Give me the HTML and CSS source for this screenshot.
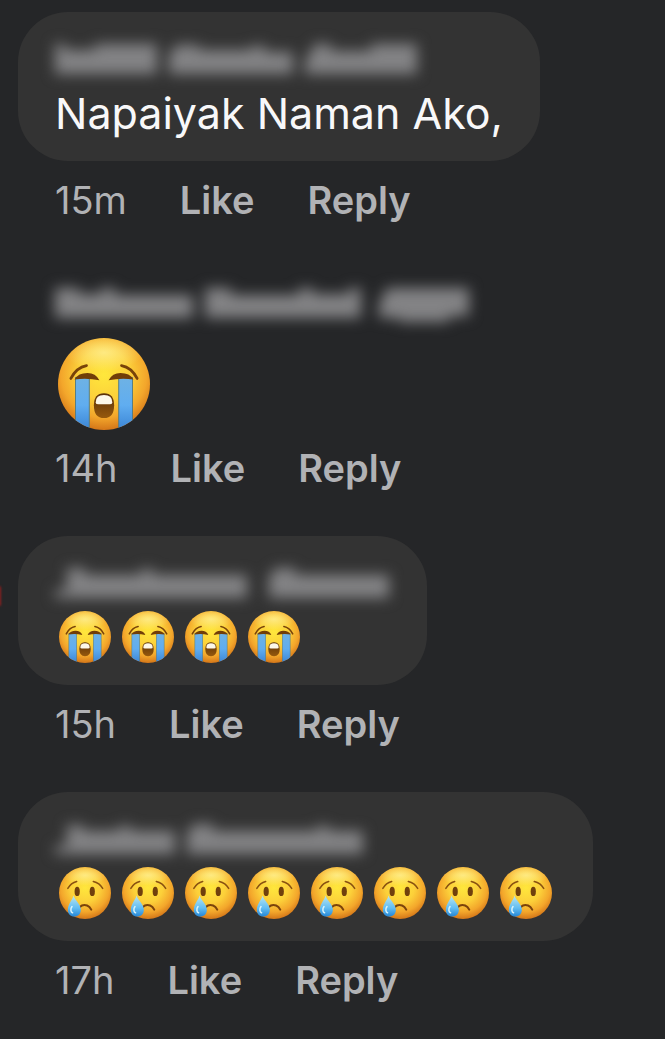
FILE: index.html
```
<!DOCTYPE html>
<html lang="en">
<head>
    <meta charset="UTF-8">
    <meta name="viewport" content="width=device-width, initial-scale=1.0">
    <title>Comments</title>
    <link rel="stylesheet" href="styles.css">
</head>
<body>

    <!-- emoji shapes, reused below -->
    <svg class="defs" aria-hidden="true">
        <defs>
            <radialGradient id="face" cx="50%" cy="40%" r="62%">
                <stop offset="0" stop-color="#ffe73c"/>
                <stop offset="0.45" stop-color="#fcd03a"/>
                <stop offset="0.75" stop-color="#f3a62b"/>
                <stop offset="1" stop-color="#cf6f16"/>
            </radialGradient>
            <radialGradient id="shine" cx="50%" cy="50%" r="50%">
                <stop offset="0" stop-color="#fff3a0" stop-opacity="0.7"/>
                <stop offset="1" stop-color="#fff3a0" stop-opacity="0"/>
            </radialGradient>
            <linearGradient id="stream" x1="0" y1="0" x2="0" y2="1">
                <stop offset="0" stop-color="#6eb2e4"/>
                <stop offset="0.5" stop-color="#60adf0"/>
                <stop offset="1" stop-color="#3680d2"/>
            </linearGradient>
            <linearGradient id="drop" x1="0" y1="0" x2="0" y2="1">
                <stop offset="0" stop-color="#b9e6f0"/>
                <stop offset="0.6" stop-color="#62bdf2"/>
                <stop offset="1" stop-color="#2687d6"/>
            </linearGradient>
            <linearGradient id="mouth" x1="0" y1="0" x2="0" y2="1">
                <stop offset="0" stop-color="#593008"/>
                <stop offset="1" stop-color="#96590d"/>
            </linearGradient>
            <clipPath id="round"><circle cx="50" cy="50" r="50"/></clipPath>

            <symbol id="sob" viewBox="0 0 100 100">
                <circle cx="50" cy="50" r="50" fill="url(#face)"/>
                <ellipse cx="50" cy="16" rx="42" ry="20" fill="url(#shine)" clip-path="url(#round)"/>
                <g clip-path="url(#round)" stroke="#527a83" stroke-width="1">
                    <rect x="19" y="43" width="15" height="60" fill="url(#stream)"/>
                    <rect x="66" y="43" width="15" height="60" fill="url(#stream)"/>
                </g>
                <path d="M14 44Q20 32 31 30M69 30Q80 32 86 44" fill="none" stroke="#784309" stroke-width="3" stroke-linecap="round"/>
                <path d="M18 45Q22 38 32 38Q41 38 45 46Q32 43 18 45ZM55 46Q59 38 68 38Q78 38 82 45Q68 43 55 46Z" fill="#713e08"/>
                <path d="M39 73Q39 60 50 60Q61 60 61 73Q61 87 50 87Q39 87 39 73Z" fill="url(#mouth)"/>
                <path d="M41 70Q41 62 50 62Q59 62 59 70Q59 72 56 72H44Q41 72 41 70Z" fill="#fdf8e9"/>
            </symbol>

            <symbol id="cry" viewBox="0 0 100 100">
                <circle cx="50" cy="50" r="50" fill="url(#face)"/>
                <ellipse cx="50" cy="16" rx="42" ry="20" fill="url(#shine)" clip-path="url(#round)"/>
                <path d="M17 41Q23 31 34 28M66 28Q78 31 84 41" fill="none" stroke="#8a5211" stroke-width="3" stroke-linecap="round"/>
                <ellipse cx="35" cy="47" rx="5" ry="9" fill="#70400d"/>
                <ellipse cx="64" cy="47" rx="5" ry="9" fill="#70400d"/>
                <path d="M40 77Q46 71 54 74Q59 76 62 82" fill="none" stroke="#7b430b" stroke-width="4" stroke-linecap="round"/>
                <path d="M28 55C25 65 17 72 17 82C17 90 22 95 29 95C37 95 42 90 42 82C42 72 31 65 28 55Z" fill="url(#drop)"/>
                <path d="M25 76C21 81 23 87 26 88" fill="none" stroke="#d9f3fb" stroke-width="3" stroke-linecap="round"/>
            </symbol>
        </defs>
    </svg>

    <main class="comments">

        <article class="comment">
            <div class="bubble">
                <svg class="name" width="366" height="46" aria-label="Hidden name" role="img">
                    <path d="M0 8H10V14H40V8H102V38H0ZM122 9H144V14H196V10H210V16H238V38H114V18ZM260 8H276V15H316V8H362V38H250V26Z"/>
                </svg>
                <p class="text">Napaiyak Naman Ako,</p>
            </div>
            <div class="actions">
                <time>15m</time>
                <button type="button">Like</button>
                <button type="button">Reply</button>
            </div>
        </article>

        <article class="comment">
            <div class="bubble plain">
                <svg class="name" width="414" height="46" aria-label="Hidden name" role="img">
                    <path d="M0 8H24V14H46V8H60V15H138V38H0ZM150 8H176V15H244V8H258V14H294V8H306V38H150ZM332 8H414V36H394V42H344V38H324V24Z"/>
                </svg>
                <div class="emojis large">
                    <svg role="img" aria-label="Loudly crying face"><use href="#sob"/></svg>
                </div>
            </div>
            <div class="actions">
                <time>14h</time>
                <button type="button">Like</button>
                <button type="button">Reply</button>
            </div>
        </article>

        <article class="comment has-story">
            <div class="bubble">
                <svg class="name" width="335" height="46" aria-label="Hidden name" role="img">
                    <path d="M12 8H30V15H86V9H98V15H192V38H0V30H12ZM222 8H240V15H334V38H214V16Z"/>
                </svg>
                <div class="emojis">
                    <svg role="img" aria-label="Loudly crying face"><use href="#sob"/></svg>
                    <svg role="img" aria-label="Loudly crying face"><use href="#sob"/></svg>
                    <svg role="img" aria-label="Loudly crying face"><use href="#sob"/></svg>
                    <svg role="img" aria-label="Loudly crying face"><use href="#sob"/></svg>
                </div>
            </div>
            <div class="actions">
                <time>15h</time>
                <button type="button">Like</button>
                <button type="button">Reply</button>
            </div>
        </article>

        <article class="comment">
            <div class="bubble">
                <svg class="name" width="310" height="46" aria-label="Hidden name" role="img">
                    <path d="M12 9H28V15H64V10H76V15H120V38H0V30H12ZM140 8H158V15H262V10H274V15H308V38H132V16Z"/>
                </svg>
                <div class="emojis">
                    <svg role="img" aria-label="Crying face"><use href="#cry"/></svg>
                    <svg role="img" aria-label="Crying face"><use href="#cry"/></svg>
                    <svg role="img" aria-label="Crying face"><use href="#cry"/></svg>
                    <svg role="img" aria-label="Crying face"><use href="#cry"/></svg>
                    <svg role="img" aria-label="Crying face"><use href="#cry"/></svg>
                    <svg role="img" aria-label="Crying face"><use href="#cry"/></svg>
                    <svg role="img" aria-label="Crying face"><use href="#cry"/></svg>
                    <svg role="img" aria-label="Crying face"><use href="#cry"/></svg>
                </div>
            </div>
            <div class="actions">
                <time>17h</time>
                <button type="button">Like</button>
                <button type="button">Reply</button>
            </div>
        </article>

    </main>

</body>
</html>
```
FILE: styles.css
```
* {
    box-sizing: border-box;
}

body {
    margin: 0;
    background-color: #252628;
    color: #f8f8f9;
    font-family: Inter, "Liberation Sans", sans-serif;
}

.defs {
    position: absolute;
    width: 0;
    height: 0;
}

.comments {
    display: flex;
    flex-direction: column;
    gap: 45px;
    padding: 12px 18px 0;
}

.comment {
    display: flex;
    flex-direction: column;
    align-items: flex-start;
    gap: 16px;
    position: relative;
}

/* edge of the story ring round the avatar */
.has-story::before {
    content: "";
    position: absolute;
    left: -20px;
    top: 50px;
    width: 3px;
    height: 20px;
    border-radius: 2px;
    background-color: #8a2020;
    filter: blur(1px);
}

.bubble {
    display: flex;
    flex-direction: column;
    gap: 3px;
    max-width: 100%;
    padding: 24px 37px 20px;
    border-radius: 50px;
    background-color: #333333;
}

.plain {
    padding-top: 12px;
    padding-bottom: 0;
    background: none;
}

.name {
    display: block;
    max-width: 100%;
    overflow: visible;
    fill: #838385;
    filter: blur(7px);
}

.text {
    margin: 0;
    font-size: 43px;
    line-height: 56px;
}

.emojis {
    display: flex;
    align-items: center;
    gap: 11px;
    min-height: 56px;
    padding: 0 4px;
}

.emojis svg {
    width: 52px;
    height: 52px;
}

.emojis.large {
    height: 100px;
    padding: 10px 3px 0;
}

.emojis.large svg {
    width: 92px;
    height: 92px;
}

.actions {
    display: flex;
    gap: 53px;
    padding-left: 37px;
    color: #b1b2b5;
    font-size: 38px;
    line-height: 46px;
}

.actions button {
    padding: 0;
    border: none;
    background: none;
    color: inherit;
    font: inherit;
    font-weight: 600;
    cursor: pointer;
}

.actions button:hover {
    text-decoration: underline;
}
```
